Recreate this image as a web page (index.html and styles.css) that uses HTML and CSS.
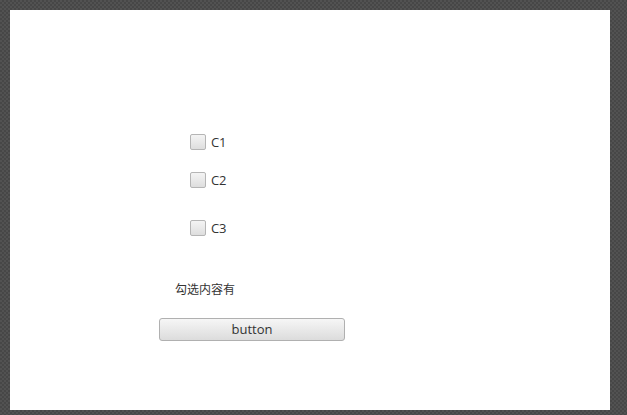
FILE: index.html
```html
<!DOCTYPE html>
<html>
<head>
<meta charset="utf-8">
<link rel="stylesheet" href="styles.css">
</head>
<body>
<div class="panel">
  <div class="checks">
    <label class="check row1"><span class="box"></span><span class="ctext">C1</span></label>
    <label class="check row2"><span class="box"></span><span class="ctext">C2</span></label>
    <label class="check row3"><span class="box"></span><span class="ctext">C3</span></label>
  </div>
  <div class="result">勾选内容有</div>
  <div class="btnwrap"><button class="btn">button</button></div>
</div>
</body>
</html>
```
FILE: styles.css
```css
html, body {
  margin: 0;
  padding: 0;
}
body {
  width: 627px;
  height: 415px;
  overflow: hidden;
  background-color: #4b4b4b;
  background-image: repeating-conic-gradient(#474747 0 25%, #525252 0 50%);
  background-size: 4px 4px;
  font-family: "Open Sans", "Noto Sans CJK SC", sans-serif;
}
.panel {
  margin: 10px 0 0 10px;
  width: 600px;
  height: 400px;
  background: #ffffff;
  display: flex;
  flex-direction: column;
}
.checks {
  padding: 124px 0 0 180px;
  display: flex;
  flex-direction: column;
}
.check {
  display: flex;
  align-items: center;
  height: 16px;
  gap: 5px;
}
.row2 { margin-top: 22px; }
.row3 { margin-top: 32px; }
.box {
  width: 14px;
  height: 14px;
  border: 1px solid #b5b5b5;
  border-radius: 2px;
  background: linear-gradient(#f4f4f4, #dedede);
  box-sizing: content-box;
}
.ctext {
  font-size: 13px;
  color: #333333;
  line-height: 16px;
  letter-spacing: -0.2px;
}
.result {
  margin: 45px 0 0 165px;
  font-size: 12px;
  line-height: 16px;
  color: #333333;
  font-family: "Noto Sans CJK SC", sans-serif;
}
.btnwrap {
  margin: 20px 0 0 149px;
}
.btn {
  width: 186px;
  height: 23px;
  border: 1px solid #b0b0b0;
  border-radius: 3px;
  background: linear-gradient(#f6f6f6, #dcdcdc);
  font-family: "Open Sans", sans-serif;
  font-size: 13px;
  color: #333333;
  padding: 0;
  line-height: 21px;
}
```
